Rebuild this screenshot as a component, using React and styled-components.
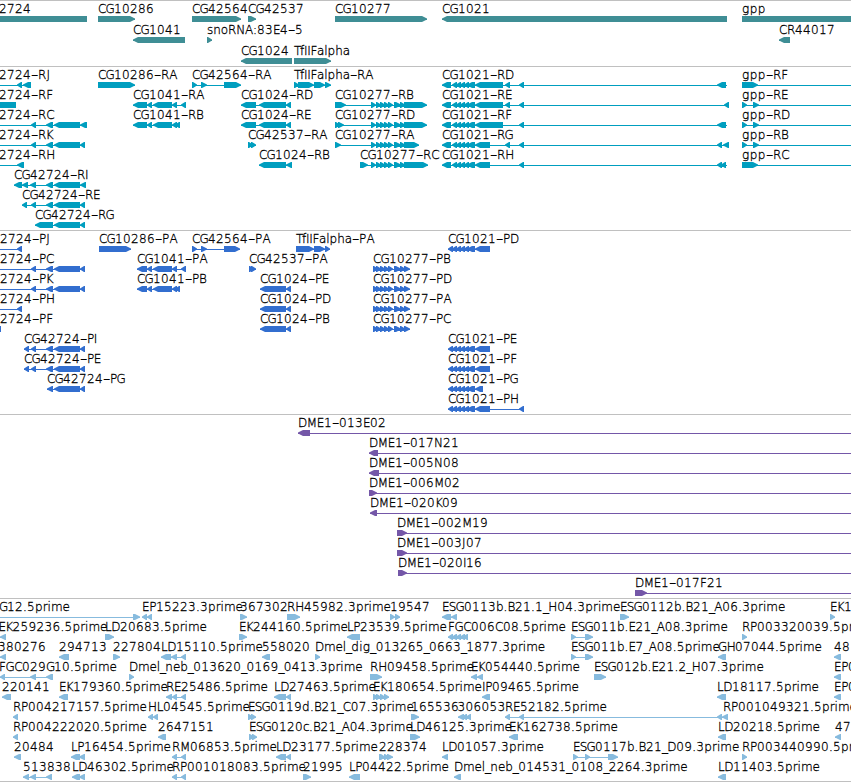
import React from "react";
import styled, { createGlobalStyle } from "styled-components";

const GlobalStyle = createGlobalStyle`
  body {
    margin: 0;
    background: #ffffff;
    overflow: hidden;
  }
`;

const VIEW_WIDTH = 851;
const LABEL_FONT = '200 12px "DejaVu Sans Light", "DejaVu Sans", sans-serif';

const Browser = styled.main`
  display: flex;
  flex-direction: column;
  width: ${VIEW_WIDTH}px;
  height: 782px;
  overflow: hidden;
  background: #ffffff;
  border-bottom: 1px solid #c0c0c0;
  box-sizing: border-box;
`;

const TrackPanel = styled.section`
  display: flex;
  flex-direction: column;
  flex: none;
  height: ${(p) => p.$height}px;
  border-top: 1px solid #c0c0c0;
  box-sizing: border-box;
  color: ${(p) => p.$color};
`;

const TrackRow = styled.div`
  flex: none;
  height: ${(p) => p.$pitch}px;
`;

const LabelStrip = styled.div`
  position: relative;
  height: 15px;
`;

const FeatureLabel = styled.span`
  position: absolute;
  top: 1px;
  left: ${(p) => p.$x}px;
  font: ${LABEL_FONT};
  font-kerning: none;
  line-height: 15px;
  white-space: pre;
  color: #000000;
  -webkit-text-stroke: 0.3px #000000;
`;

const Hyphen = styled.span`
  display: inline-block;
  width: 7px;
  transform: scaleX(1.7);
  transform-origin: 0 50%;
`;

const Glyphs = styled.svg`
  display: block;
  width: ${VIEW_WIDTH}px;
  height: 6px;
  overflow: visible;
  fill: currentColor;
`;

// Whole-pixel advances used to space the label characters.
const ADVANCE = {
  A: 8, B: 7.5, C: 8, D: 9, E: 7, F: 7, G: 8, H: 9, I: 3, J: 4, K: 7, L: 6, M: 10,
  N: 9, P: 7, R: 8, S: 7, T: 6, a: 7, b: 7.5, c: 6, d: 8, e: 7, f: 4, g: 8, h: 8,
  i: 3, l: 3, m: 12, n: 8, o: 7, p: 8, r: 5, s: 6, "_": 5.3, ".": 4, ":": 4,
};

const measure = document.createElement("canvas").getContext("2d");
measure.font = LABEL_FONT;

function spacingFor(run) {
  const target = [...run].reduce((sum, ch) => sum + (ADVANCE[ch] ?? 8), 0);
  return (target - measure.measureText(run).width) / run.length;
}

function Label({ x, text }) {
  const runs = text.match(/[A-Z]+|[a-z]+|\d+|./g) ?? [];
  return (
    <FeatureLabel $x={x}>
      {runs.map((run, i) =>
        run === "-" ? (
          <Hyphen key={i}>-</Hyphen>
        ) : (
          <span key={i} style={{ letterSpacing: `${spacingFor(run)}px` }}>
            {run}
          </span>
        )
      )}
    </FeatureLabel>
  );
}

function blockPath(start, end, dir) {
  if (dir === ">") {
    const s = Math.min(start, end - 5);
    const neck = end - Math.min(end - s, 6) + 1;
    return `M${s} 0H${neck}L${end} 2.5V3.5L${neck} 6H${s}Z`;
  }
  if (dir === "<") {
    const e = Math.max(end, start + 5);
    const neck = start + Math.min(e - start, 6) - 1;
    return `M${e} 0H${neck}L${start} 2.5V3.5L${neck} 6H${e}Z`;
  }
  return `M${start} 0H${end}V6H${start}Z`;
}

function Feature({ dir, blocks, line }) {
  const spans = blocks.split(" ").map((b) => b.split("-").map(Number));
  const [from, to] = line ?? [spans[0][0], spans[spans.length - 1][1]];
  return (
    <g>
      <rect x={from} y="3" width={to - from} height="1" shapeRendering="crispEdges" />
      <path d={spans.map(([s, e]) => blockPath(s, e, dir)).join("")} fillRule="nonzero" />
    </g>
  );
}

// label, label x, strand, blocks, optional extent of the connecting line
const f = (text, x, dir, blocks, line) => ({ text, x, dir, blocks, line });

const tail = "31-36 46-53 54-80 80-85";
const exons277 = "371-376 377-381 381-385 385-389 389-393 394-401 401-405";
const cds277 = "373-378 377-381 381-385 385-389 389-393 394-401 401-405 404-410";
const exons1021 = "442-451 452-456 456-460 460-464 464-467 467-475";
const cds1021 = "448-452 452-456 456-460 460-464 464-467 467-475";

const TRACKS = [
  {
    color: "#3f8e95",
    height: 66,
    pitch: 21,
    rows: [
      [
        f("2724", -1, "|", "0-87"),
        f("CG10286", 98, ">", "98-135"),
        f("CG42564", 192, ">", "192-241"),
        f("CG42537", 248, ">", "248-256"),
        f("CG10277", 335, ">", "335-427"),
        f("CG1021", 442, "<", "442-727"),
        f("gpp", 742, "|", "742-851"),
      ],
      [
        f("CG1041", 133, "<", "133-185"),
        f("snoRNA:83E4-5", 207, ">", "207-212"),
        f("CR44017", 779, "<", "779-790"),
      ],
      [f("CG1024", 241, "<", "241-292"), f("TfIIFalpha", 294, ">", "294-331")],
    ],
  },
  {
    color: "#009ebf",
    height: 164,
    pitch: 20,
    rows: [
      [
        f("2724-RJ", -1, "<", "17-22 23-31", [0, 31]),
        f("CG10286-RA", 98, ">", "98-135"),
        f("CG42564-RA", 192, ">", "192-197 201-207 224-241"),
        f("TfIIFalpha-RA", 294, ">", "294-299 298-314 314-325 325-331"),
        f("CG1021-RD", 442, "<", `${exons1021} 475-503 505-510 519-524 717-726`, [442, 727]),
        f("gpp-RF", 742, ">", "742-758", [742, 851]),
      ],
      [
        f("2724-RF", -1, "|", "0-16"),
        f("CG1041-RA", 133, "<", "133-147 147-152 153-172 172-177 181-186"),
        f("CG1024-RD", 241, "<", "241-256 259-286 286-291"),
        f("CG10277-RB", 335, ">", `335-346 ${exons277} 404-427`),
        f("CG1021-RE", 442, "<", `${exons1021} 475-503 505-510 519-524 724-729`),
        f("gpp-RE", 742, ">", "742-747 753-759", [742, 851]),
      ],
      [
        f("2724-RC", -1, "<", "31-36 46-53 54-80 80-87", [0, 87]),
        f("CG1041-RB", 133, "<", "133-147 147-152 153-172 172-176 175-180"),
        f("CG1024-RE", 241, "<", "241-256 259-286 286-291"),
        f("CG10277-RD", 335, ">", `335-340 338-344 ${exons277} 404-427`),
        f("CG1021-RF", 442, "<", `${exons1021} 475-503 519-524 717-726`, [442, 727]),
        f("gpp-RD", 742, ">", "742-747 753-759", [742, 851]),
      ],
      [
        f("2724-RK", -1, "<", tail, [0, 85]),
        f("CG42537-RA", 248, ">", "248-253 251-256"),
        f("CG10277-RA", 335, ">", `335-341 ${exons277} 404-419`),
        f("CG1021-RG", 442, "<", `${exons1021} 475-490 505-510 519-524 717-722 723-729`),
        f("gpp-RB", 742, ">", "742-747 753-759", [742, 851]),
      ],
      [
        f("2724-RH", -1, "<", "17-24", [0, 24]),
        f("CG1024-RB", 259, "<", "259-286 286-292"),
        f("CG10277-RC", 360, ">", `360-368 ${exons277} 404-428`),
        f("CG1021-RH", 442, "<", `${exons1021} 475-490 519-524 717-722 721-726`, [442, 727]),
        f("gpp-RC", 742, ">", "742-758", [742, 851]),
      ],
      [f("CG42724-RI", 14, "<", "14-22 22-28 30-36 46-53 54-80 80-86")],
      [f("CG42724-RE", 22, "<", `22-27 ${tail}`)],
      [f("CG42724-RG", 35, "<", "35-53 54-80 80-85")],
    ],
  },
  {
    color: "#326ecf",
    height: 184,
    pitch: 20,
    rows: [
      [
        f("2724-PJ", 0, "<", "17-22", [0, 22]),
        f("CG10286-PA", 99, ">", "99-131"),
        f("CG42564-PA", 192, ">", "192-197 201-207 224-240"),
        f("TfIIFalpha-PA", 296, ">", "296-314 314-325 325-330"),
        f("CG1021-PD", 448, "<", `${cds1021} 475-490`),
      ],
      [
        f("2724-PC", 0, "<", tail, [0, 85]),
        f("CG1041-PA", 137, "<", "137-147 147-152 153-172 172-177 181-186"),
        f("CG42537-PA", 249, ">", "249-254 251-256"),
        f("CG10277-PB", 373, ">", cds277),
      ],
      [
        f("2724-PK", 0, "<", tail, [0, 85]),
        f("CG1041-PB", 137, "<", "137-147 147-152 153-172 172-176 175-180"),
        f("CG1024-PE", 260, "<", "260-286 286-291"),
        f("CG10277-PD", 373, ">", cds277),
      ],
      [
        f("2724-PH", 0, "<", "17-22", [0, 22]),
        f("CG1024-PD", 260, "<", "260-286 286-291"),
        f("CG10277-PA", 373, ">", cds277),
      ],
      [
        f("2724-PF", 0, "|", "0-1"),
        f("CG1024-PB", 260, "<", "260-286 286-291"),
        f("CG10277-PC", 373, ">", cds277),
      ],
      [f("CG42724-PI", 24, "<", `24-29 ${tail}`), f("CG1021-PE", 448, "<", `${cds1021} 475-490`)],
      [f("CG42724-PE", 24, "<", `24-29 ${tail}`), f("CG1021-PF", 448, "<", `${cds1021} 475-490`)],
      [f("CG42724-PG", 47, "<", "47-53 54-80 80-85"), f("CG1021-PG", 448, "<", `${cds1021} 475-483`)],
      [f("CG1021-PH", 448, "<", `${cds1021} 475-490 519-524`)],
    ],
  },
  {
    color: "#7457a8",
    height: 184,
    pitch: 20,
    rows: [
      [f("DME1-013E02", 298, "<", "298-310", [298, 851])],
      [f("DME1-017N21", 369, "<", "369-378", [369, 851])],
      [f("DME1-005N08", 369, "<", "369-379", [369, 851])],
      [f("DME1-006M02", 369, ">", "369-377", [369, 851])],
      [f("DME1-020K09", 370, "<", "370-377", [370, 851])],
      [f("DME1-002M19", 397, ">", "397-407", [397, 851])],
      [f("DME1-003J07", 397, ">", "397-407", [397, 851])],
      [f("DME1-020I16", 398, ">", "398-407", [398, 851])],
      [f("DME1-017F21", 635, ">", "635-647", [635, 851])],
    ],
  },
  {
    color: "#87bbde",
    height: 183,
    pitch: 20,
    rows: [
      [
        f("G12.5prime", -1, ">", "133-140", [0, 140]),
        f("EP15223.3prime", 142, "<", "142-147 147-152"),
        f("367302", 240, ">", "240-247"),
        f("RH45982.3prime", 287, ">", "287-300"),
        f("19547", 390, ">", "390-395 395-400"),
        f("ESG0113b.B21.1_H04.3prime", 442, "<", "442-451 451-457"),
        f("ESG0112b.B21_A06.3prime", 620, ">", "620-629"),
        f("EK1", 830, ">", "830-835"),
      ],
      [
        f("EK259236.5prime", -1.5, "<", "0-6"),
        f("LD20683.5prime", 105, ">", "105-114"),
        f("EK244160.5prime", 239, ">", "239-247"),
        f("LP23539.5prime", 347, "<", "347-360"),
        f("FGC006C08.5prime", 448, "<", "448-452 452-456 456-460 460-464 463-467"),
        f("ESG011b.E21_A08.3prime", 571, ">", "571-576 585-593"),
        f("RP003320039.5pr", 742, ">", "742-747"),
      ],
      [
        f("380276", -2, "<", "0-6"),
        f("294713", 59, "<", "59-69"),
        f("227804", 113, ">", "113-120"),
        f("LD15110.5prime", 161, "<", "161-171 171-177 181-186"),
        f("558020", 262, "<", "262-270"),
        f("Dmel_dig_013265_0663_1877.3prime", 315, ">", "315-320"),
        f("ESG011b.E7_A08.5prime", 571, ">", "571-576 585-593"),
        f("GH07044.5prime", 718, "<", "718-726"),
        f("48", 834, "<", "834-841"),
      ],
      [
        f("FGC029G10.5prime", -1, "<", "0-4 30-36 46-53"),
        f("Dmel_neb_013620_0169_0413.3prime", 129, ">", "129-134"),
        f("RH09458.5prime", 370, ">", "370-382"),
        f("EK054440.5prime", 471, "<", "471-477 477-483"),
        f("ESG012b.E21.2_H07.3prime", 594, ">", "594-606"),
        f("EP0", 834, "<", "834-841"),
      ],
      [
        f("220141", 2, "<", "2-11"),
        f("EK179360.5prime", 59, "<", "59-68"),
        f("RE25486.5prime", 166, "<", "166-172 172-177 181-186"),
        f("LD27463.5prime", 274, "<", "274-286 286-291"),
        f("EK180654.5prime", 373, ">", "373-378 377-381 381-385 385-389"),
        f("IP09465.5prime", 482, "<", "482-490"),
        f("LD18117.5prime", 717, "<", "717-726"),
        f("EP0", 834, "<", "834-841"),
      ],
      [
        f("RP004217157.5prime", 13, "<", "13-18"),
        f("HL04545.5prime", 148, "<", "148-153 153-158"),
        f("ESG0119d.B21_C07.3prime", 248, ">", "248-253 251-256"),
        f("165536", 411, ">", "411-419"),
        f("306053", 457.5, "<", "458-464 462-467 466-471"),
        f("RE52182.5prime", 505, "<", "505-510 519-524 717-722", [505, 722]),
        f("RP001049321.5prime", 723, "<", "722-728"),
      ],
      [
        f("RP004222020.5prime", 13, "<", "13-18"),
        f("2647151", 158, "<", "158-166"),
        f("ESG0120c.B21_A04.3prime", 249, ">", "249-254 252-257"),
        f("LD46125.3prime", 410, ">", "410-420"),
        f("EK162738.5prime", 509, "<", "509-518"),
        f("LD20218.5prime", 718, "<", "718-726"),
        f("47", 835, "<", "835-841"),
      ],
      [
        f("20484", 14, "<", "14-21"),
        f("LP16454.5prime", 71, "<", "71-80 79-85"),
        f("RM06853.5prime", 172, "<", "172-177 181-186"),
        f("LD23177.5prime", 276, "<", "276-286 286-291"),
        f("228374", 379, ">", "379-384 381-385 385-389 387-393"),
        f("LD01057.3prime", 442, "<", "442-448"),
        f("ESG0117b.B21_D09.3prime", 573, ">", "573-578 585-590 608-618"),
        f("RP003440990.5pr", 742, ">", "742-747"),
      ],
      [
        f("513838", 23, "<", "23-29 30-36 46-52"),
        f("LD46302.5prime", 72, "<", "72-80 79-85"),
        f("RP001018083.5prime", 172, "<", "172-177 181-186"),
        f("21995", 303, ">", "303-311"),
        f("LP04422.5prime", 349, "<", "349-360"),
        f("Dmel_neb_014531_0108_2264.3prime", 454, "<", "454-461"),
        f("LD11403.5prime", 718, "<", "718-726"),
      ],
    ],
  },
];

export default function App() {
  return (
    <>
      <GlobalStyle />
      <Browser>
        {TRACKS.map((track, t) => (
          <TrackPanel key={t} $height={track.height} $color={track.color}>
            {track.rows.map((row, r) => (
              <TrackRow key={r} $pitch={track.pitch}>
                <LabelStrip>
                  {row.map((feature) => (
                    <Label key={feature.text} x={feature.x} text={feature.text} />
                  ))}
                </LabelStrip>
                <Glyphs viewBox={`0 0 ${VIEW_WIDTH} 6`} aria-hidden="true">
                  {row.map((feature) => (
                    <Feature key={feature.text} {...feature} />
                  ))}
                </Glyphs>
              </TrackRow>
            ))}
          </TrackPanel>
        ))}
      </Browser>
    </>
  );
}
